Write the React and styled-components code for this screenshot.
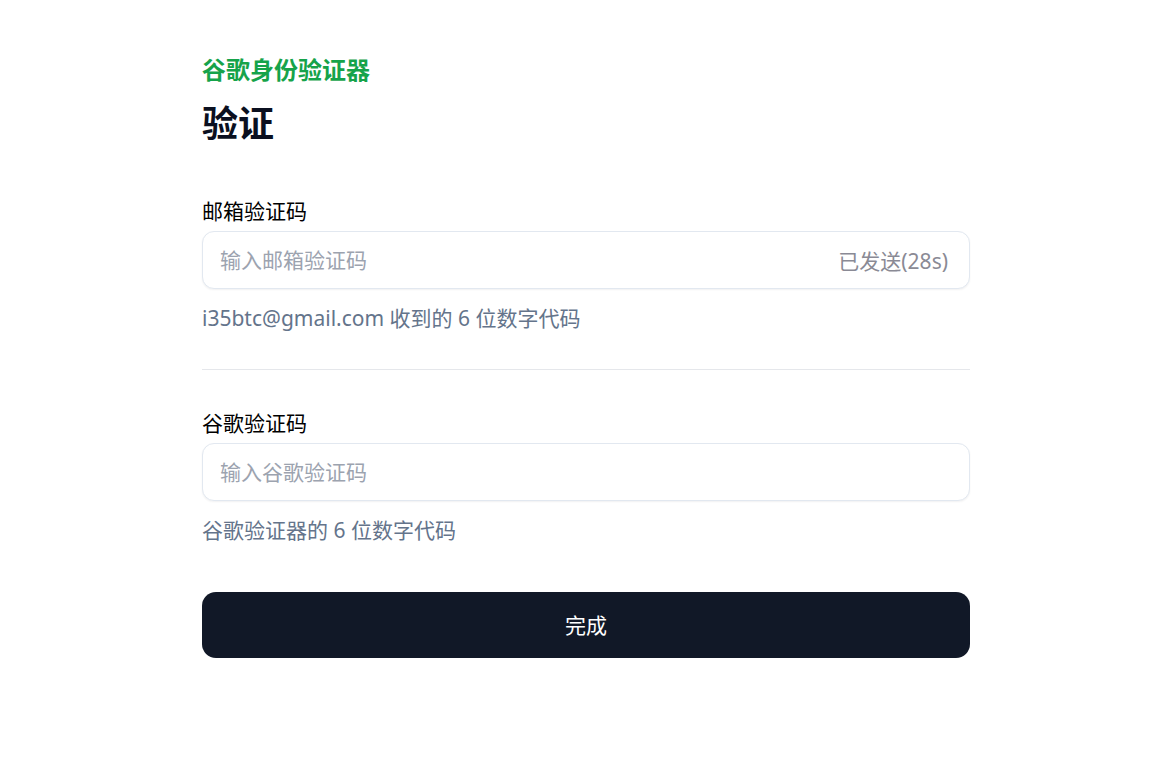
import React from 'react'
import styled, { createGlobalStyle } from 'styled-components'

const GlobalStyle = createGlobalStyle`
  html, body {
    margin: 0;
    padding: 0;
    background: #ffffff;
  }
  body {
    font-family: "Noto Sans", "Noto Sans CJK SC", sans-serif;
    color: #0f172a;
  }
`

const Page = styled.div`
  padding: 54px 0 40px 202px;
`

const Panel = styled.div`
  width: 768px;
  display: flex;
  flex-direction: column;
`

const Brand = styled.div`
  font-size: 24px;
  font-weight: 700;
  line-height: 32px;
  color: #16a34a;
`

const Title = styled.h1`
  margin: 16px 0 0;
  font-size: 36px;
  font-weight: 700;
  line-height: 44px;
  color: #0b1020;
`

const Field = styled.div`
  display: flex;
  flex-direction: column;
  margin-top: ${p => p.top}px;
`

const Label = styled.label`
  font-size: 21px;
  line-height: 28px;
  color: #000;
`

const InputBox = styled.div`
  margin-top: 6px;
  height: 58px;
  box-sizing: border-box;
  border: 1px solid #e2e8f0;
  border-radius: 12px;
  box-shadow: 0 1px 2px rgba(15, 23, 42, 0.06);
  display: flex;
  align-items: center;
  padding: 0 21px 0 17px;
  background: #fff;
`

const Input = styled.input`
  flex: 1;
  min-width: 0;
  border: none;
  outline: none;
  background: transparent;
  font-family: inherit;
  font-size: 21px;
  color: #0f172a;
  padding: 0;
  &::placeholder {
    color: #9ca3af;
  }
`

const Suffix = styled.span`
  font-size: 21px;
  color: #8a8a95;
  white-space: nowrap;
`

const Hint = styled.div`
  margin-top: 15px;
  font-size: 21px;
  line-height: 28px;
  color: #64748b;
`

const Divider = styled.hr`
  margin: 37px 0 0;
  border: none;
  border-top: 1px solid #e5e7eb;
`

const Submit = styled.button`
  margin-top: 48px;
  height: 66px;
  border: none;
  border-radius: 14px;
  background: #111827;
  color: #fff;
  font-family: inherit;
  font-size: 21px;
  padding: 0 0 3px;
  cursor: pointer;
`

export default function App() {
  return (
    <>
      <GlobalStyle />
      <Page>
        <Panel>
          <Brand>谷歌身份验证器</Brand>
          <Title>验证</Title>

          <Field top={51}>
            <Label>邮箱验证码</Label>
            <InputBox>
              <Input placeholder='输入邮箱验证码' />
              <Suffix>已发送(28s)</Suffix>
            </InputBox>
            <Hint>i35btc@gmail.com 收到的 6 位数字代码</Hint>
          </Field>

          <Divider />

          <Field top={39}>
            <Label>谷歌验证码</Label>
            <InputBox>
              <Input placeholder='输入谷歌验证码' />
            </InputBox>
            <Hint>谷歌验证器的 6 位数字代码</Hint>
          </Field>

          <Submit>完成</Submit>
        </Panel>
      </Page>
    </>
  )
}
